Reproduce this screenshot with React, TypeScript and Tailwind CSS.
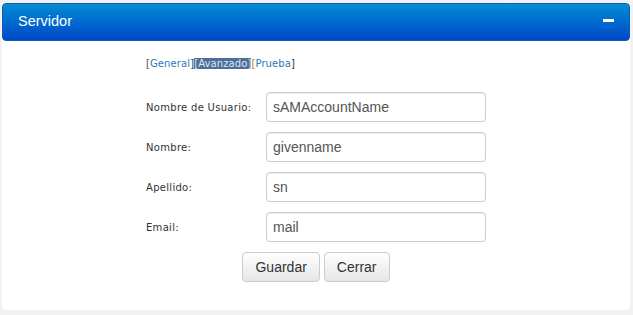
import React from 'react'

const fields = [
  { label: 'Nombre de Usuario:', value: 'sAMAccountName' },
  { label: 'Nombre:', value: 'givenname' },
  { label: 'Apellido:', value: 'sn' },
  { label: 'Email:', value: 'mail' },
]

export default function App() {
  return (
    <div className="w-[633px] h-[315px] bg-[#f2f2f2] pt-[3px] px-[2px] overflow-hidden">
      <div className="w-[628px] h-[307px] bg-white rounded-[4px] flex flex-col">
        {/* Header */}
        <div className="h-[38px] shrink-0 rounded-[4px] bg-linear-to-b from-[#0a8bd3] to-[#0046c8] border border-[#0b5fb0] flex items-center justify-between pl-[15px] pr-[15px]">
          <span className="text-white text-[14.5px] font-['Liberation_Sans',Arial,sans-serif]">Servidor</span>
          <span className="block w-[11px] h-[3px] bg-white mb-[4px]" />
        </div>

        {/* Body */}
        <div className="flex-1 flex flex-col">
          <div className="pl-[144px] pt-[16px] text-[10px] leading-[14px] tracking-[0.1px] font-['DejaVu_Sans',Verdana,sans-serif] text-[#333]">
            <span className="text-[#7a4a2a]">[</span>
            <span className="text-[#2a7ac0]">General</span>
            <span className="text-[#333]">]</span>
            <span className="bg-[#4e6f9c] text-[#dfe5ee]">[Avanzado]</span>
            <span className="text-[#c07a30]">[</span>
            <span className="text-[#2a7ac0]">Prueba</span>
            <span className="text-[#333]">]</span>
          </div>

          <div className="mt-[21px] flex flex-col gap-[10px] pl-[144px]">
            {fields.map((f) => (
              <div key={f.label} className="flex items-center">
                <label className="w-[120px] text-[10px] tracking-[0.3px] text-[#333] font-['DejaVu_Sans',Verdana,sans-serif]">
                  {f.label}
                </label>
                <input
                  readOnly
                  value={f.value}
                  className="w-[220px] h-[30px] border border-[#cccccc] rounded-[4px] px-[6px] text-[14px] text-[#555] font-['Liberation_Sans',Arial,sans-serif] outline-none shadow-[inset_0_1px_1px_rgba(0,0,0,0.075)]"
                />
              </div>
            ))}
          </div>

          <div className="mt-[10px] flex justify-center gap-[4px]">
            <button className="h-[30px] px-[12px] border border-[#cccccc] rounded-[4px] bg-linear-to-b from-white to-[#e6e6e6] text-[14px] text-[#333] font-['Liberation_Sans',Arial,sans-serif]">
              Guardar
            </button>
            <button className="h-[30px] px-[12px] border border-[#cccccc] rounded-[4px] bg-linear-to-b from-white to-[#e6e6e6] text-[14px] text-[#333] font-['Liberation_Sans',Arial,sans-serif]">
              Cerrar
            </button>
          </div>
        </div>
      </div>
    </div>
  )
}
